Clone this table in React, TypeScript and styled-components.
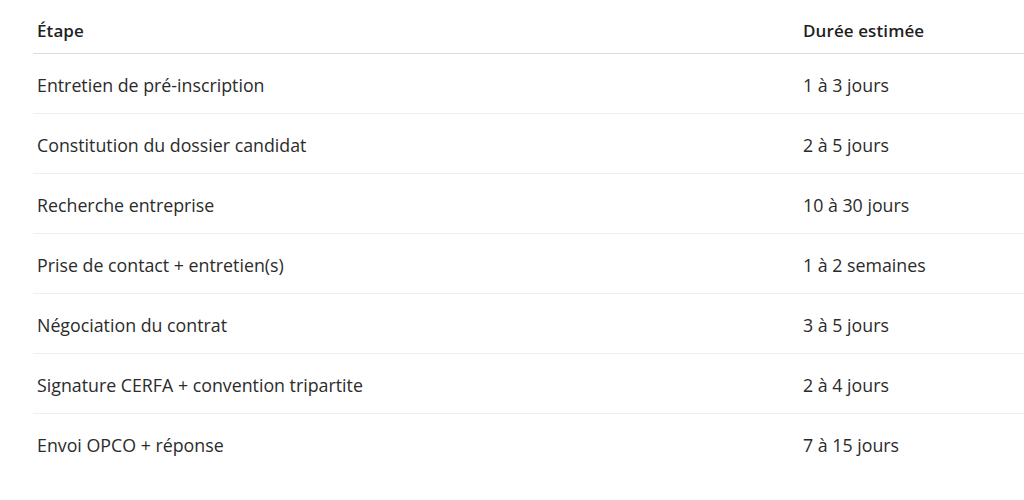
import styled, { createGlobalStyle } from 'styled-components'

const GlobalStyle = createGlobalStyle`
    html, body {
        margin: 0;
        padding: 0;
        background: #ffffff;
        overflow: hidden;
    }
    body {
        font-family: 'Open Sans', 'Noto Sans', sans-serif;
        color: #242424;
    }
`

const Page = styled.div`
    width: 1024px;
    height: 500px;
    padding: 0 0 0 33px;
    box-sizing: border-box;
    overflow: hidden;
`

const Table = styled.table`
    width: 1010px;
    border-collapse: collapse;
`

const HeadCell = styled.th<{ $width?: number }>`
    text-align: left;
    font-weight: 600;
    font-size: 17px;
    letter-spacing: 0.1px;
    color: #1f1f1f;
    height: 53px;
    padding: 9px 0 0 4px;
    width: ${(p) => (p.$width ? `${p.$width}px` : 'auto')};
    border-bottom: 1px solid #dcdcdc;
    vertical-align: middle;
    box-sizing: border-box;
`

const Row = styled.tr<{ $last?: boolean }>`
    border-bottom: 1px solid ${(p) => (p.$last ? 'transparent' : '#f0f0f0')};
`

const Cell = styled.td`
    height: 60px;
    padding: 3px 0 0 4px;
    font-size: 17.8px;
    color: #2b2b2b;
    vertical-align: middle;
    box-sizing: border-box;
`

const rows = [
    ['Entretien de pré-inscription', '1 à 3 jours'],
    ['Constitution du dossier candidat', '2 à 5 jours'],
    ['Recherche entreprise', '10 à 30 jours'],
    ['Prise de contact + entretien(s)', '1 à 2 semaines'],
    ['Négociation du contrat', '3 à 5 jours'],
    ['Signature CERFA + convention tripartite', '2 à 4 jours'],
    ['Envoi OPCO + réponse', '7 à 15 jours'],
]

export default function App() {
    return (
        <Page>
            <GlobalStyle />
            <Table>
                <thead>
                    <tr>
                        <HeadCell $width={766}>Étape</HeadCell>
                        <HeadCell>Durée estimée</HeadCell>
                    </tr>
                </thead>
                <tbody>
                    {rows.map(([step, time], i) => (
                        <Row key={step} $last={i === rows.length - 1}>
                            <Cell>{step}</Cell>
                            <Cell>{time}</Cell>
                        </Row>
                    ))}
                </tbody>
            </Table>
        </Page>
    )
}
